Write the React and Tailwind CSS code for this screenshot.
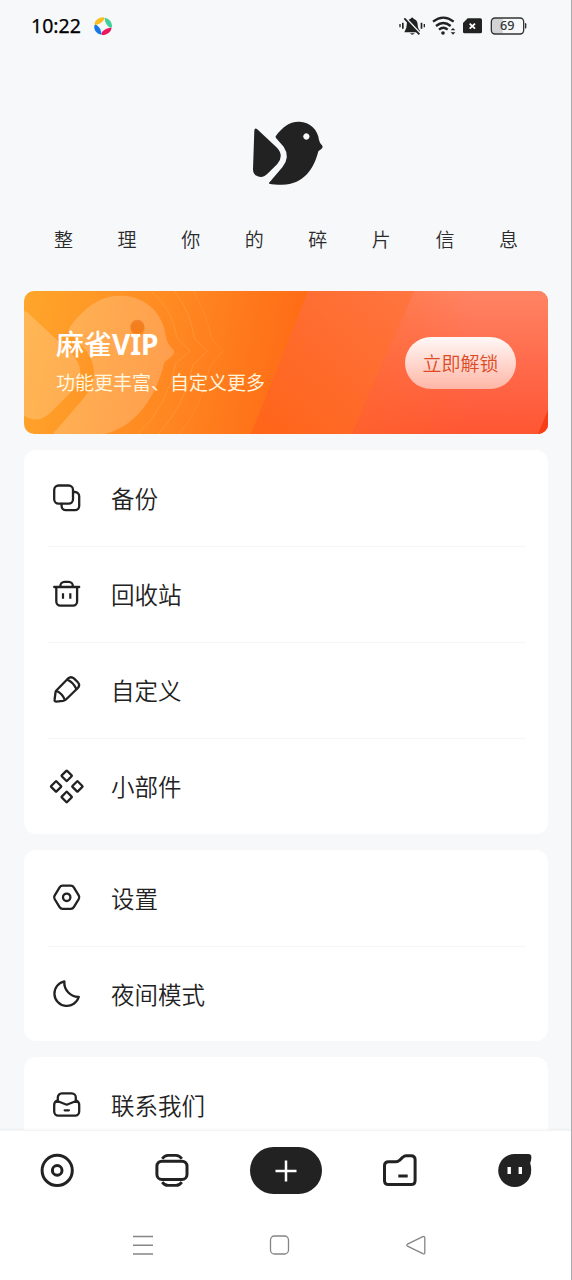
import React from "react";

const LINE = {
  fill: "none",
  stroke: "#222",
  strokeWidth: 2.3,
  strokeLinecap: "round",
  strokeLinejoin: "round",
};

const ICONS = {
  backup: (
    <>
      <rect x="8.2" y="7.5" width="18.8" height="18.2" rx="4.4" />
      <path d="M27.4 14h1.6a4.2 4.2 0 0 1 4.2 4.2v9.8a4.2 4.2 0 0 1-4.2 4.2H19.8a4.2 4.2 0 0 1-4.2-4.2v-2" />
    </>
  ),
  trash: (
    <>
      <path d="M8.2 13H33.2M14.4 12.6v-.8a4 4 0 0 1 4-4h4.4a4 4 0 0 1 4 4v.8M10.3 13.4v14.2a4 4 0 0 0 4 4h12.8a4 4 0 0 0 4-4V13.4" />
      <path d="M17 19.3v5.4M24.3 19.3v5.4" strokeLinecap="butt" strokeWidth="2.2" />
    </>
  ),
  pencil: (
    <>
      <path d="M10.6 20.2 21.8 8.7Q25 5.8 28.2 8.6L31.6 12Q34.6 15 31.8 18L20 29.5Q18.8 30.6 17 30.9L10.4 31.6Q8.2 31.6 8.6 29.4L9.6 22Q9.8 21 10.6 20.2Z" />
      <path d="M21.4 9.8Q27.2 12.2 30.4 19M10.6 21Q16 23.4 18.8 29.6" />
    </>
  ),
  widgets: (
    <>
      <rect x="-3.8" y="-3.8" width="7.6" height="7.6" rx="0.6" transform="translate(20.7 9.8) rotate(45)" />
      <rect x="-3.8" y="-3.8" width="7.6" height="7.6" rx="0.6" transform="translate(10.1 20.4) rotate(45)" />
      <rect x="-3.8" y="-3.8" width="7.6" height="7.6" rx="0.6" transform="translate(31.4 20.4) rotate(45)" />
      <rect x="-3.8" y="-3.8" width="7.6" height="7.6" rx="0.6" transform="translate(20.7 31) rotate(45)" />
    </>
  ),
  settings: (
    <>
      <path d="M16.6 7.7h8.2q2 0 3 1.7l5 8.2q1 1.7 0 3.4l-5 8.2q-1 1.7-3 1.7h-8.2q-2 0-3-1.7l-5-8.2q-1-1.7 0-3.4l5-8.2q1-1.7 3-1.7Z" />
      <circle cx="20.7" cy="19.3" r="3.7" />
    </>
  ),
  moon: <path d="M18.4 7.4A12.4 12.4 0 1 0 32.8 22.8C25 23.2 17.5 16 18.4 7.4Z" />,
  contact: (
    <>
      <path d="M11.8 15.4v-3a4 4 0 0 1 4-4h10a4 4 0 0 1 4 4v3" />
      <path d="M10.6 15.8 20.7 19.7 30.8 15.8Q33.2 17.2 33.2 20v6.6a4 4 0 0 1-4 4H12.2a4 4 0 0 1-4-4V20Q8.2 17.2 10.6 15.8ZM18.7 25.3h4.2" />
    </>
  ),
};

function Bird() {
  return (
    <>
      <path d="M73 76Q74 68 81 72L141 128Q163 152 142 177L114 205Q99 221 83 214Q69 209 69 193Z" />
      <path
        fillRule="evenodd"
        d="M138 92C157 67 178 49 208 50C240 51 264 74 267 105Q269 115 276 121Q281 126 275 131L265 139C252 193 219 239 157 239Q130 239 118 236Q114 234 120 230L157 187Q182 156 161 125L138 99Q135 95 138 92ZM229 85a9.5 9.5 0 1 0 .1 0Z"
      />
    </>
  );
}

function MenuRow({ icon, label, last }) {
  return (
    <div className="relative flex h-24 items-center pl-[22px]">
      <svg className="h-10 w-10 shrink-0" viewBox="0 0 40 40" {...LINE}>
        {ICONS[icon]}
      </svg>
      <span className="ml-[25px] text-[23.5px] font-[350] leading-8 text-[#222]">{label}</span>
      {!last && <i className="absolute -bottom-px left-6 right-[22px] h-px bg-[#f6f6f6]" />}
    </div>
  );
}

function Card({ rows, className }) {
  return (
    <section className={"rounded-xl bg-white " + className}>
      {rows.map(([icon, label], i) => (
        <MenuRow key={icon} icon={icon} label={label} last={i === rows.length - 1} />
      ))}
    </section>
  );
}

function StatusBar() {
  return (
    <header className="flex h-[50px] items-center pl-[31px] pt-px">
      <span className="pt-px font-['Noto_Sans'] text-[19.5px] leading-6 text-black [-webkit-text-stroke:0.25px_#000]">10:22</span>
      <svg className="ml-[12px] h-5 w-5" viewBox="0 0 60 60">
        <path d="M5 27C3 15 17 3 32 4Q37 6 32 13Q23 25 5 27Z" fill="#fbbd20" />
        <path d="M35 5C48 7 58 18 57 32Q54 38 47 32Q36 23 35 5Z" fill="#3ecf9b" />
        <path d="M56 35C54 48 41 58 27 57Q22 54 29 46Q38 36 56 35Z" fill="#ec1763" />
        <path d="M4 29Q7 23 14 30Q25 38 25 56C12 54 2 43 4 29Z" fill="#1677e8" />
      </svg>
      <svg className="ml-auto h-[50px] w-[182px]" viewBox="0 0 546 150">
        <g fill="#222">
          <path d="M45 89Q50 83 50 72Q50 56 62 53Q66 46 71 53Q83 57 83 72Q84 85 90 89V94H43Z" />
          <path d="M60 97h14q-7 8-14 0Z" />
          <path d="M28 69h4v10h-4ZM36 65h5v18h-5ZM92 65h5v18h-5ZM101 69h4v10h-4Z" />
          <circle cx="159" cy="96" r="5.5" />
          <path d="M182 88l7-7 7 7ZM182 94h14l-7 7Z" />
          <path d="M233 52h38q5 0 5 5v35q0 5-5 5h-47q-5 0-5-5V66Z" />
        </g>
        <path d="M46 50 92 99" stroke="#f6f8fa" strokeWidth="6" />
        <path d="M43 52 88 100" stroke="#222" strokeWidth="5.5" />
        <g fill="none" stroke="#222" strokeWidth="7">
          <path d="M129 62Q160 38 191 62M138 75Q160 57 182 75M147 86Q160 75 173 86" />
        </g>
        <path d="M239 68l16 15M255 68l-16 15" stroke="#fff" strokeWidth="5.5" />
        <path d="M313 52h25v46h-25q-8 0-8-8V60q0-8 8-8Z" fill="#d2d3d5" />
        <rect x="304" y="51" width="97" height="48" rx="11" fill="none" stroke="#333" strokeWidth="4" />
        <path d="M405 66q4 0 4 4v9q0 4-4 4Z" fill="#333" />
        <text x="352" y="88" textAnchor="middle" fontSize="38" fontWeight="500" fontFamily="Noto Sans, sans-serif" fill="#333">
          69
        </text>
      </svg>
    </header>
  );
}

function Banner() {
  return (
    <section className="relative mx-6 flex h-[143px] items-center justify-between overflow-hidden rounded-[10px] bg-[linear-gradient(100deg,#ffa62b_0%,#ff8420_32%,#ff6714_56%,#ff5b1c_100%)] px-8">
      <svg className="absolute inset-0 h-full w-full" viewBox="0 0 524 143">
        <defs>
          <linearGradient id="mid" x1="1" y1="0" x2="0" y2="1">
            <stop offset="0" stopColor="#ff7540" />
            <stop offset=".5" stopColor="#ff6b2c" />
            <stop offset="1" stopColor="#ff6518" />
          </linearGradient>
          <linearGradient id="end" x1="0" y1="0" x2="0" y2="1">
            <stop offset="0" stopColor="#ff8463" />
            <stop offset=".5" stopColor="#ff6b4c" />
            <stop offset="1" stopColor="#ff5633" />
          </linearGradient>
          <linearGradient id="fade" x1="0" y1="0" x2="1" y2="0">
            <stop offset="0" stopColor="#ff6a28" stopOpacity=".55" />
            <stop offset=".6" stopColor="#ff6a28" stopOpacity="0" />
          </linearGradient>
        </defs>
        <g transform="translate(-57.1 -32.4) scale(.745)" fill="#fff" fillOpacity=".2">
          <Bird />
        </g>
        <circle cx="113.4" cy="35.7" r="7" fill="#ed781c" fillOpacity=".75" />
        <g fill="none" stroke="#ffc06b" strokeOpacity=".28" strokeWidth="1">
          <path d="M127 0Q149 18 153 47L166 60L152 72Q144 114 114 143" />
          <path d="M150 0Q167 21 170 47L183 60L169 74Q160 117 134 143" />
          <path d="M169 0Q183 23 187 47L199 60L186 75Q178 116 155 143" strokeOpacity=".18" />
        </g>
        <path d="M284 0H390L328 143H227Z" fill="url(#mid)" />
        <path d="M390 0H524V143H328Z" fill="url(#end)" />
        <path d="M390 0H524V143H328Z" fill="url(#fade)" />
        <path d="M524 119V143H514Z" fill="#f93d16" />
      </svg>
      <div className="relative -mt-[5px]">
        <h1 className="text-[28px] font-medium leading-8 text-white">
          麻雀<b className="font-['Noto_Sans'] font-bold">VIP</b>
        </h1>
        <p className="mt-[10px] text-[19px] leading-6 text-[#fff6df]">功能更丰富、自定义更多</p>
      </div>
      <button className="relative h-[52px] w-[111px] rounded-full bg-linear-to-b from-[#fff8f7] to-[#fdb6a6] text-[19px] font-[350] leading-6 text-[#dc4a25]">
        立即解锁
      </button>
    </section>
  );
}

function BottomNav() {
  return (
    <nav className="h-[150px] shrink-0 border-t border-[#f3f4f5] bg-white shadow-[0_-1px_3px_rgba(0,0,0,0.03)]">
      <div className="grid h-[79px] grid-cols-5 place-items-center">
        <svg className="mb-[2px] h-10 w-10" viewBox="0 0 40 40" {...LINE} strokeWidth="3">
          <circle cx="20.2" cy="20.4" r="15.1" />
          <circle cx="20.2" cy="20.4" r="4.8" />
        </svg>
        <svg className="mb-[2px] h-10 w-10" viewBox="0 0 40 40" {...LINE} strokeWidth="3">
          <rect x="4.9" y="11.2" width="30.1" height="18.2" rx="5" />
          <g fill="none" strokeLinecap="butt" strokeWidth="2.8">
            <path d="M10.2 8.7Q12.6 5.4 16 5.4h8q3.4 0 5.8 3.3" />
            <path d="M10.2 32.1Q12.6 35.4 16 35.4h8q3.4 0 5.8-3.3" />
          </g>
        </svg>
        <button className="flex h-[47px] w-[72px] items-center justify-center rounded-full bg-[#222]">
          <svg className="h-6 w-6" viewBox="0 0 24 24" fill="none" stroke="#fff" strokeWidth="2.5">
            <path d="M12 1.5v21M1.5 12h21" />
          </svg>
        </button>
        <svg className="mb-[2px] h-10 w-10" viewBox="0 0 40 40" {...LINE} strokeWidth="3">
          <path d="M8.6 11.8H16Q18 11.8 19.5 10.3L22.8 7.2Q24.2 5.8 26.2 5.8H31Q35.1 5.8 35.1 9.8V30.5Q35.1 34.6 31 34.6H8.6Q4.5 34.6 4.5 30.5V15.8Q4.5 11.8 8.6 11.8Z" />
          <path d="M18.3 26h9.4" strokeLinecap="butt" />
        </svg>
        <svg className="mb-[2px] h-10 w-10" viewBox="0 0 40 40">
          <path d="M19.7 4H33.2Q36.4 4 36.4 7.2Q36.4 10 35.2 13Q36.2 16.5 36.2 20.4A16.5 16.5 0 1 1 19.7 4Z" fill="#222" />
          <path d="M12.5 17h3.4v7h-3.4ZM23.6 17H27v7h-3.4Z" fill="#fff" />
        </svg>
      </div>
      <div className="flex h-[70px] items-center gap-[112.5px] pl-[131px]">
        <svg className="h-6 w-6" viewBox="0 0 24 24" fill="none" stroke="#858585" strokeWidth="1.4">
          <path d="M2 3.5h20M2 12.3h20M2 21h20" />
        </svg>
        <svg className="h-6 w-6" viewBox="0 0 24 24" fill="none" stroke="#858585" strokeWidth="1.3">
          <rect x="2.5" y="3" width="18" height="18" rx="4" />
        </svg>
        <svg className="h-6 w-6" viewBox="0 0 24 24" fill="none" stroke="#858585" strokeWidth="1.3" strokeLinejoin="round">
          <path d="M3.5 11.2 18.8 3.7Q20.8 3 20.8 5V19.4Q20.8 21.6 18.8 20.7L3.5 13.1Q2 12.1 3.5 11.2Z" />
        </svg>
      </div>
    </nav>
  );
}

export default function App() {
  return (
    <div className="relative flex h-[1280px] w-[572px] flex-col overflow-hidden bg-[#f6f8fa] font-['Noto_Sans_CJK_SC',sans-serif]">
      <StatusBar />
      <main className="min-h-0 flex-1 overflow-hidden">
        <svg className="ml-[230px] mt-[55px] h-[95px] w-[110px]" viewBox="0 0 330 285" fill="#222">
          <Bird />
        </svg>
        <div className="mx-[54px] mt-[27px] mb-10 flex h-6 items-center justify-between text-[19px] font-[350] leading-6 text-[#2b2b2b]">
          {[..."整理你的碎片信息"].map((c) => (
            <span key={c}>{c}</span>
          ))}
        </div>
        <Banner />
        <div className="mx-6 mt-4 flex flex-col gap-4">
          <Card
            className="h-[384px]"
            rows={[
              ["backup", "备份"],
              ["trash", "回收站"],
              ["pencil", "自定义"],
              ["widgets", "小部件"],
            ]}
          />
          <Card
            className="h-[191px]"
            rows={[
              ["settings", "设置"],
              ["moon", "夜间模式"],
            ]}
          />
          <Card className="h-48" rows={[["contact", "联系我们"]]} />
        </div>
      </main>
      <BottomNav />
      <i className="absolute inset-y-0 right-0 w-px bg-[#a9abad]" />
    </div>
  );
}
